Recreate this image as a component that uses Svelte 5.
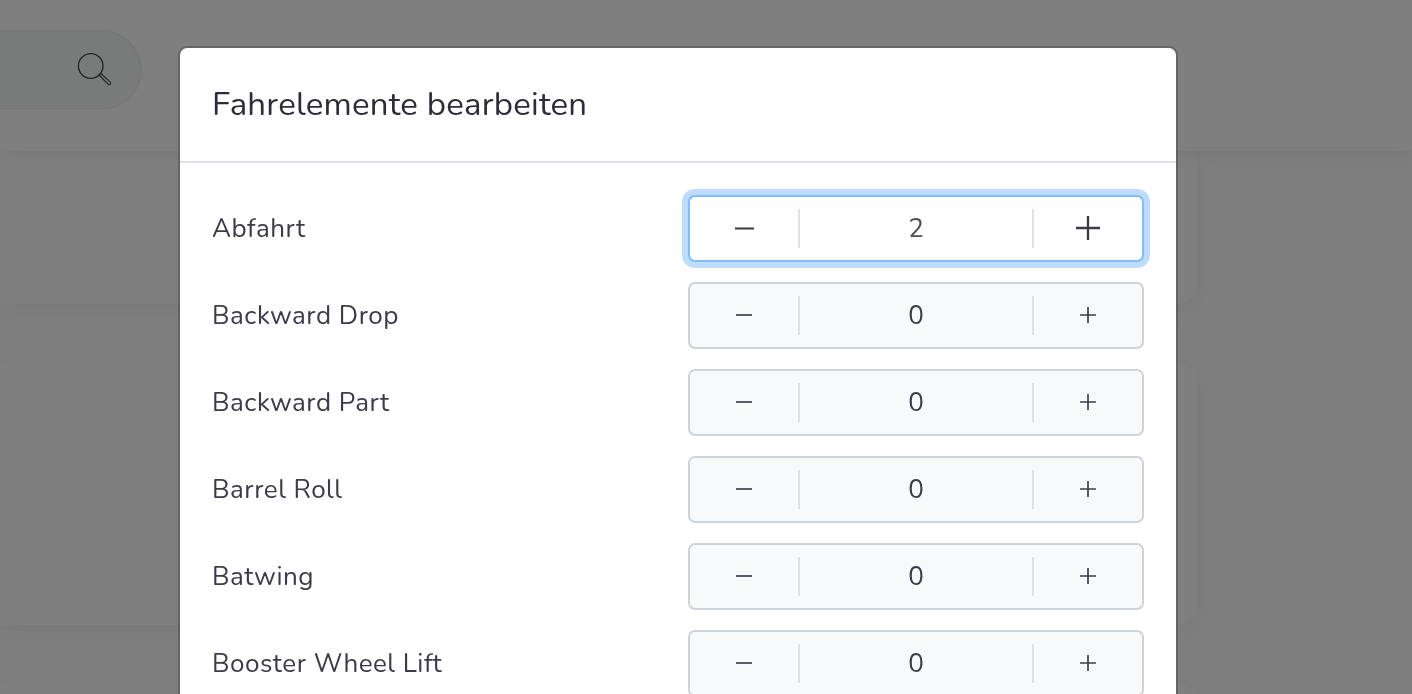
<script>
  const rows = [
    { label: 'Abfahrt', value: 2, focused: true },
    { label: 'Backward Drop', value: 0 },
    { label: 'Backward Part', value: 0 },
    { label: 'Barrel Roll', value: 0 },
    { label: 'Batwing', value: 0 },
    { label: 'Booster Wheel Lift', value: 0 }
  ];
</script>

<div class="page">
  <header class="top">
    <div class="search">
      <svg class="lens" width="36" height="36" viewBox="0 0 36 36" fill="none" stroke="#45434f">
        <circle cx="14.7" cy="13" r="12.3" stroke-width="1.3" />
        <path d="M23 22 L25 20.5 L34.3 29.2 Q35 30.5 34 31.5 Q33 32 32 31.2 Z" stroke-width="1.1" stroke-linejoin="round" />
      </svg>
    </div>
  </header>
  <section class="card first"></section>
  <section class="card second"></section>
  <section class="card third"></section>
</div>

<div class="backdrop"></div>

<div class="modal">
  <div class="modal-head">
    <h2>Fahrelemente bearbeiten</h2>
  </div>
  <div class="modal-body">
    {#each rows as row}
      <div class="row">
        <span class="label">{row.label}</span>
        <div class="stepper" class:focused={row.focused}>
          <button class="step minus" aria-label="Weniger">
            <svg viewBox="0 0 24 24" fill="none" stroke="currentColor"><path d="M0 12 H24" /></svg>
          </button>
          <span class="value">{row.value}</span>
          <button class="step plus" aria-label="Mehr">
            <svg viewBox="0 0 24 24" fill="none" stroke="currentColor"><path d="M0 12 H24 M12 0 V24" /></svg>
          </button>
        </div>
      </div>
    {/each}
  </div>
</div>

<style>
  :global(body) {
    margin: 0;
    overflow: hidden;
    background: #fff;
    font-family: "Nunito", "Lato", "Noto Sans", sans-serif;
    color: #3d3b49;
  }

  .page {
    width: 1412px;
    height: 694px;
    overflow: hidden;
    background: #fdfdfd;
  }

  .top {
    height: 151px;
    box-sizing: border-box;
    padding-top: 30px;
    background: #fff;
    box-shadow: 0 3px 22px rgba(0, 0, 0, 0.07);
    position: relative;
    z-index: 1;
  }

  .search {
    width: 142px;
    height: 80px;
    box-sizing: border-box;
    border: 2px solid #eeeeee;
    border-left: 0;
    border-radius: 0 40px 40px 0;
    background: #f3f6f5;
    display: flex;
    align-items: center;
    justify-content: flex-end;
    padding-right: 28px;
  }

  .lens {
    display: block;
    margin-top: 1px;
  }

  .card {
    width: 1197px;
    background: #fff;
    box-shadow: 0 6px 24px rgba(0, 0, 0, 0.05);
  }

  .first {
    height: 153px;
    border-radius: 0 0 20px 0;
  }

  .second {
    height: 262px;
    margin-top: 59px;
    border-radius: 0 20px 20px 0;
  }

  .third {
    height: 200px;
    margin-top: 58px;
    border-radius: 0 20px 20px 0;
  }

  .backdrop {
    position: fixed;
    inset: 0;
    z-index: 2;
    background: rgba(0, 0, 0, 0.5);
  }

  .modal {
    position: fixed;
    z-index: 3;
    left: 178px;
    top: 46px;
    width: 1000px;
    height: 800px;
    box-sizing: border-box;
    background: #fff;
    background-clip: padding-box;
    border: 2px solid rgba(0, 0, 0, 0.2);
    border-radius: 9px;
  }

  .modal-head {
    height: 115px;
    box-sizing: border-box;
    padding: 0 32px;
    display: flex;
    align-items: center;
    border-bottom: 2px solid #dee2e6;
  }

  h2 {
    margin: 0;
    font-size: 33px;
    font-weight: 400;
    letter-spacing: 0.22px;
    line-height: 1.2;
    color: #2e2c39;
  }

  .modal-body {
    padding: 32px 32px 0;
    display: flex;
    flex-direction: column;
    gap: 20px;
  }

  .row {
    display: flex;
    align-items: center;
    justify-content: space-between;
    height: 67px;
  }

  .label {
    font-size: 26px;
    letter-spacing: 0.5px;
  }

  .stepper {
    width: 456px;
    height: 67px;
    box-sizing: border-box;
    display: grid;
    grid-template-columns: 110px 1fr 110px;
    align-items: center;
    background: #f8f9fa;
    border: 2px solid #ced4da;
    border-radius: 7px;
  }

  .stepper.focused {
    background: #fff;
    border-color: #80bdff;
    box-shadow: 0 0 0 6px #bedcff;
  }

  .step {
    height: 39px;
    padding: 0;
    border: 0;
    background: none;
    color: #3d3b49;
    display: flex;
    align-items: center;
    justify-content: center;
  }

  .minus { border-right: 2px solid #dde0e5; }
  .plus { border-left: 2px solid #dde0e5; }

  .step svg {
    width: 16px;
    height: 16px;
    margin-bottom: 1px;
    stroke-width: 2.5px;
  }

  .focused .minus svg {
    width: 19px;
    height: 19px;
    stroke-width: 2.6px;
  }

  .focused .plus svg {
    width: 24px;
    height: 24px;
    stroke-width: 2.3px;
  }

  .value {
    text-align: center;
    font-size: 26px;
  }

  .focused .value {
    color: #495057;
  }
</style>
